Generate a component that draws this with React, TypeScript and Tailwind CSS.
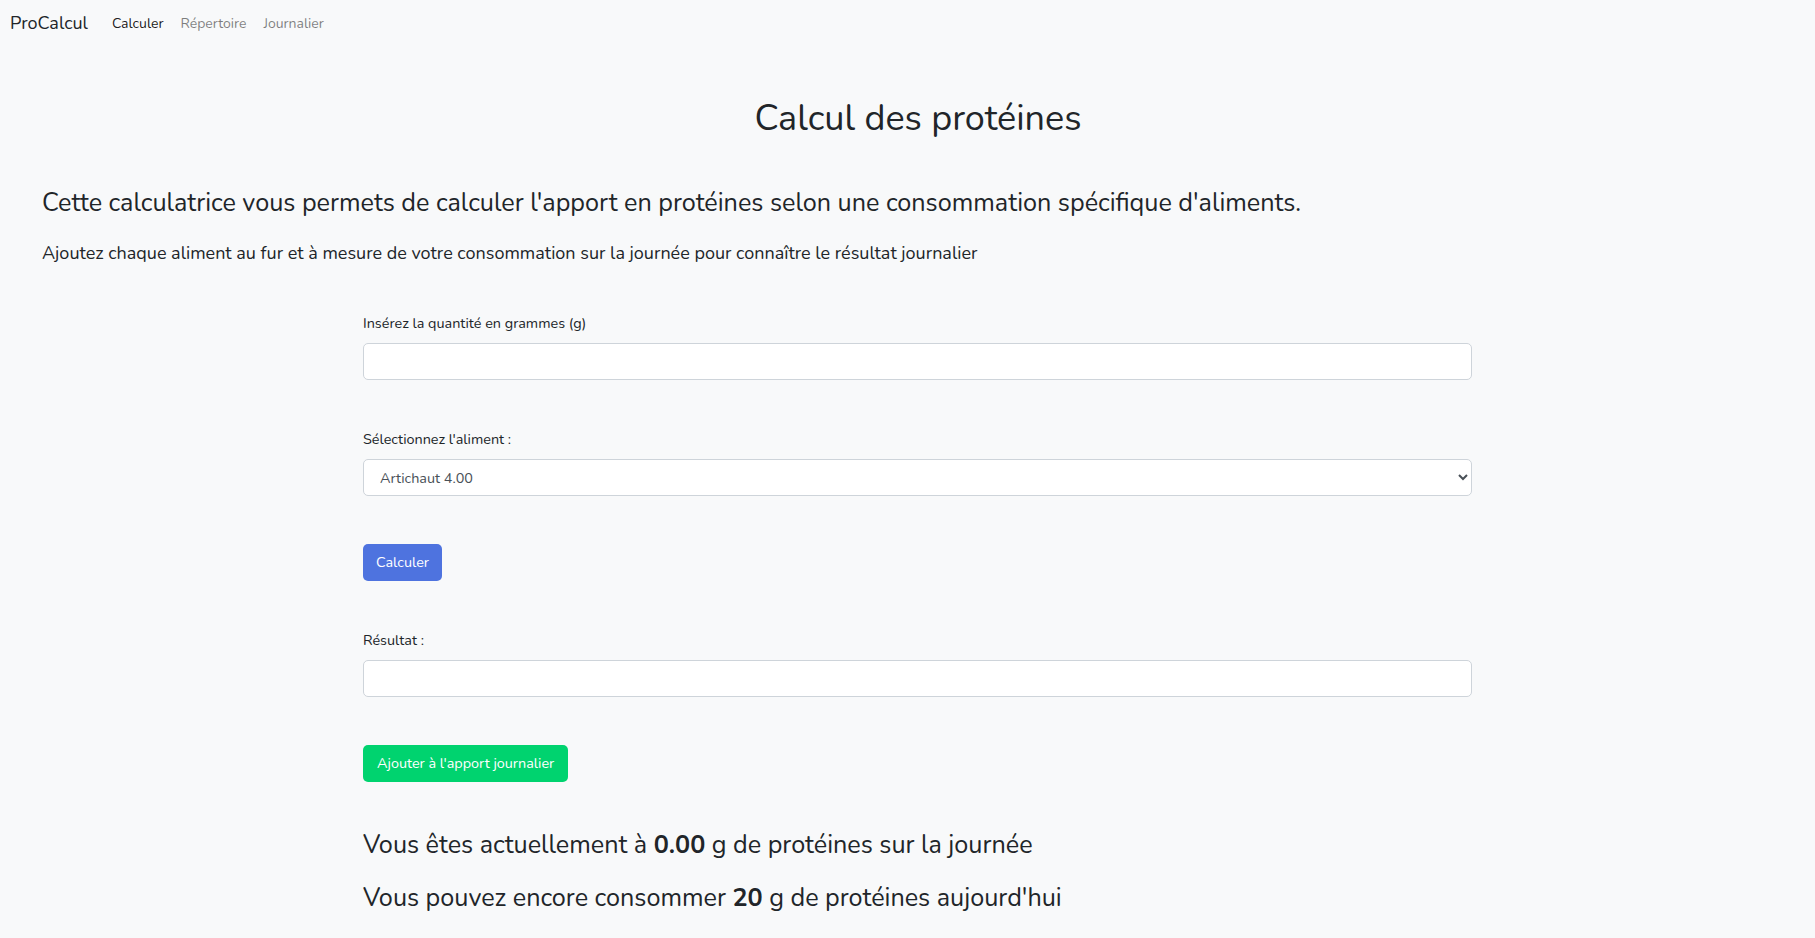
const font = "font-['Nunito','Lato',sans-serif]"

const Field = ({ label, children, top }: { label: string; children: React.ReactNode; top: string }) => (
  <div className={top}>
    <label className="block text-[14.4px] leading-[22px] text-[#212529]">{label}</label>
    <div className="mt-[9px]">{children}</div>
  </div>
)

const App = () => {
  return (
    <div className={`min-h-[938px] bg-[#f8f9fa] text-[#212529] ${font}`}>
      <nav className="flex h-[46px] items-center px-[10px]">
        <span className="mr-[24px] text-[18px] text-[#212529]">ProCalcul</span>
        <div className="flex gap-[17px] text-[14px]">
          <a className="text-[rgba(0,0,0,0.9)]">Calculer</a>
          <a className="text-[rgba(0,0,0,0.5)]">Répertoire</a>
          <a className="text-[rgba(0,0,0,0.5)]">Journalier</a>
        </div>
      </nav>

      <main>
        <h1 className="mt-[49px] pl-[21px] text-center text-[36px] leading-[48px] font-normal">Calcul des protéines</h1>

        <div className="px-[42px]">
          <p className="mt-[46px] text-[25.2px] leading-[29px]">
            Cette calculatrice vous permets de calculer l'apport en protéines selon une consommation spécifique d'aliments.
          </p>
          <p className="mt-[22px] text-[18px] leading-[27px]">
            Ajoutez chaque aliment au fur et à mesure de votre consommation sur la journée pour connaître le résultat journalier
          </p>
        </div>

        <form className="ml-[363px] w-[1109px]">
          <Field label="Insérez la quantité en grammes (g)" top="mt-[45px]">
            <input
              type="text"
              className="block h-[37px] w-full rounded-[5px] border border-[#ced4da] bg-white px-3 text-[14.4px] outline-none"
            />
          </Field>

          <Field label="Sélectionnez l'aliment :" top="mt-[48px]">
            <select className="block h-[37px] w-full rounded-[5px] border border-[#ced4da] bg-white px-3 text-[14.4px] text-[#495057] outline-none">
              <option>Artichaut 4.00</option>
            </select>
          </Field>

          <button
            type="button"
            className="mt-[48px] block h-[37px] rounded-[5px] bg-[#4e73df] px-[13px] text-[14.4px] text-white"
          >
            Calculer
          </button>

          <Field label="Résultat :" top="mt-[48px]">
            <input
              type="text"
              className="block h-[37px] w-full rounded-[5px] border border-[#ced4da] bg-white px-3 text-[14.4px] outline-none"
            />
          </Field>

          <button
            type="button"
            className="mt-[48px] block h-[37px] rounded-[5px] bg-[#00d36f] px-[14px] text-[14.4px] text-white"
          >
            Ajouter à l'apport journalier
          </button>

          <p className="mt-[48px] text-[25.2px] leading-[30px]">
            Vous êtes actuellement à <b className="font-bold">0.00</b> g de protéines sur la journée
          </p>
          <p className="mt-[23px] text-[25.2px] leading-[30px]">
            Vous pouvez encore consommer <b className="font-bold">20</b> g de protéines aujourd'hui
          </p>
        </form>
      </main>
    </div>
  )
}

export default App
